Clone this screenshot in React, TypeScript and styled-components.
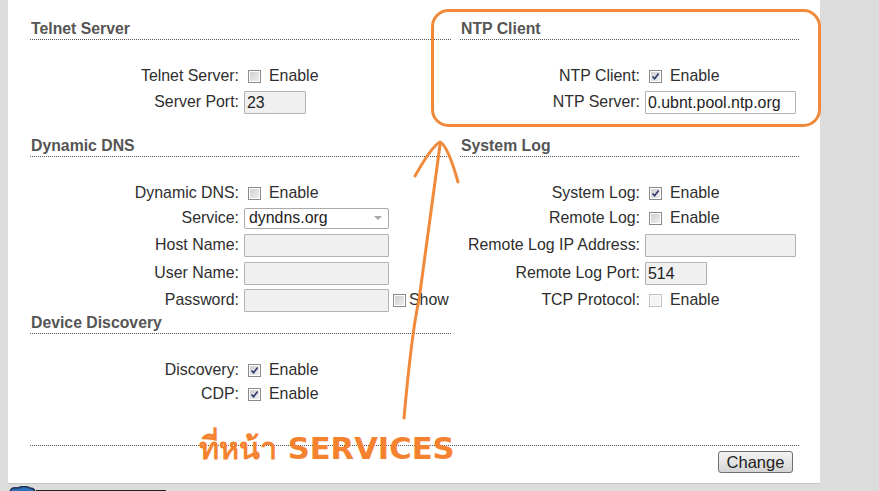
import React from "react";
import styled, { createGlobalStyle } from "styled-components";

const GlobalStyle = createGlobalStyle`
  html, body {
    margin: 0;
    padding: 0;
    background: #dcdcdc;
    font-family: "Liberation Sans", Arial, sans-serif;
  }
`;

type RowData = {
  label: string;
  kind: "check" | "input" | "select";
  checked?: boolean;
  disabled?: boolean;
  value?: string;
  width?: number;
  filled?: boolean;
  show?: boolean;
  height: number;
};

type SectionData = {
  title: string;
  gapTop: number;
  rows: RowData[];
};

const leftSections: SectionData[] = [
  {
    title: "Telnet Server",
    gapTop: 0,
    rows: [
      { label: "Telnet Server:", kind: "check", height: 24 },
      { label: "Server Port:", kind: "input", value: "23", width: 62, height: 28 },
    ],
  },
  {
    title: "Dynamic DNS",
    gapTop: 20,
    rows: [
      { label: "Dynamic DNS:", kind: "check", height: 24 },
      { label: "Service:", kind: "select", value: "dyndns.org", height: 26 },
      { label: "Host Name:", kind: "input", width: 145, height: 28 },
      { label: "User Name:", kind: "input", width: 145, height: 28 },
      { label: "Password:", kind: "input", width: 145, show: true, height: 26 },
    ],
  },
  {
    title: "Device Discovery",
    gapTop: 0,
    rows: [
      { label: "Discovery:", kind: "check", checked: true, height: 24 },
      { label: "CDP:", kind: "check", checked: true, height: 24 },
    ],
  },
];

const rightSections: SectionData[] = [
  {
    title: "NTP Client",
    gapTop: 0,
    rows: [
      { label: "NTP Client:", kind: "check", checked: true, height: 24 },
      { label: "NTP Server:", kind: "input", value: "0.ubnt.pool.ntp.org", width: 151, filled: true, height: 28 },
    ],
  },
  {
    title: "System Log",
    gapTop: 20,
    rows: [
      { label: "System Log:", kind: "check", checked: true, height: 24 },
      { label: "Remote Log:", kind: "check", height: 26 },
      { label: "Remote Log IP Address:", kind: "input", width: 151, height: 28 },
      { label: "Remote Log Port:", kind: "input", value: "514", width: 62, height: 28 },
      { label: "TCP Protocol:", kind: "check", disabled: true, height: 26 },
    ],
  },
];

const Page = styled.div`
  position: relative;
  width: 879px;
  height: 491px;
  padding-left: 8px;
  box-sizing: border-box;
  overflow: hidden;
`;

const Panel = styled.div`
  width: 812px;
  height: 484px;
  box-sizing: border-box;
  background: #fff;
  border-bottom: 1px solid #c4c4c4;
  padding: 19px 21px 0 22px;
`;

const Columns = styled.div`
  display: flex;
  gap: 9px;
  height: 426px;
`;

const Column = styled.div<{ $width: number }>`
  width: ${(p) => p.$width}px;
  display: flex;
  flex-direction: column;
`;

const Heading = styled.div<{ $gapTop: number }>`
  margin-top: ${(p) => p.$gapTop}px;
  height: 20px;
  line-height: 20px;
  padding-left: 1px;
  font-size: 15.8px;
  font-weight: bold;
  color: #555;
  border-bottom: 1px dotted #555;
`;

const Rows = styled.div`
  margin-top: 24px;
  display: flex;
  flex-direction: column;
`;

const Row = styled.div<{ $height: number }>`
  display: flex;
  align-items: center;
  height: ${(p) => p.$height}px;
  font-size: 15.9px;
  color: #2e2e2e;
`;

const Label = styled.div<{ $width: number }>`
  width: ${(p) => p.$width}px;
  text-align: right;
  white-space: nowrap;
  flex-shrink: 0;
`;

const Control = styled.div`
  display: flex;
  align-items: center;
  margin-left: 5px;
`;

const Box = styled.span<{ $disabled?: boolean; $tight?: boolean }>`
  width: 13px;
  height: 13px;
  box-sizing: border-box;
  margin: 0 ${(p) => (p.$tight ? 3 : 8)}px 0 4px;
  border: 1px solid ${(p) => (p.$disabled ? "#c2c2c2" : "#8a8a8a")};
  background: ${(p) => (p.$disabled ? "#fafafa" : "#fff")};
  padding: 1px;
  display: inline-flex;
`;

const BoxInner = styled.span<{ $disabled?: boolean }>`
  flex: 1;
  background: ${(p) =>
    p.$disabled ? "#f4f4f4" : "linear-gradient(135deg, #cfcfcf, #eeeeee)"};
  display: flex;
  align-items: center;
  justify-content: center;
`;

const TextBox = styled.div<{ $width: number; $filled?: boolean }>`
  width: ${(p) => p.$width}px;
  height: 23px;
  box-sizing: border-box;
  border: 1px solid #b3b3b3;
  border-radius: 1px;
  background: ${(p) => (p.$filled ? "#fff" : "#f0f0f0")};
  padding: 0 2px;
  line-height: 21px;
  font-size: 15.9px;
  color: #222;
  white-space: nowrap;
  overflow: hidden;
`;

const Select = styled.div`
  width: 145px;
  height: 21px;
  box-sizing: border-box;
  border: 1px solid #aaa;
  border-radius: 2px;
  background: #fff;
  padding: 0 4px;
  display: flex;
  align-items: center;
  justify-content: space-between;
  font-size: 15.9px;
  color: #222;
`;

const Caret = styled.span`
  width: 0;
  height: 0;
  border-left: 4px solid transparent;
  border-right: 4px solid transparent;
  border-top: 4px solid #a8a8a8;
  margin-right: 2px;
`;

const Actions = styled.div`
  border-top: 1px dotted #555;
  display: flex;
  justify-content: flex-end;
  padding: 5px 6px 0 0;
`;

const Button = styled.button`
  height: 22px;
  width: 75px;
  box-sizing: border-box;
  border: 1px solid #707070;
  border-radius: 3px;
  background: linear-gradient(#f4f4f4, #e4e4e4 50%, #d4d4d4);
  font-family: "Liberation Sans", Arial, sans-serif;
  font-size: 16.5px;
  color: #222;
  padding: 0;
`;

const Footer = styled.div`
  display: flex;
  align-items: flex-start;
  height: 7px;
  padding-top: 2px;
`;

const FooterBar = styled.div`
  width: 130px;
  height: 2px;
  margin-top: 4px;
  background: #222;
`;

const Overlay = styled.svg`
  position: absolute;
  left: 0;
  top: 0;
  pointer-events: none;
`;

const Callout = styled.div`
  position: absolute;
  left: 199px;
  top: 430px;
  font-family: "DejaVu Sans", Tahoma, sans-serif;
  font-weight: bold;
  font-size: 30.6px;
  line-height: 38px;
  color: #f5822f;
  white-space: nowrap;
`;

const Check: React.FC = () => (
  <svg width="9" height="9" viewBox="0 0 9 9">
    <path d="M1.5 4.5 L3.6 6.8 L7.6 1.6" fill="none" stroke="#2c3a6b" strokeWidth="1.6" />
  </svg>
);

const CheckBox: React.FC<{ checked?: boolean; disabled?: boolean; tight?: boolean }> = ({
  checked,
  disabled,
  tight,
}) => (
  <Box $disabled={disabled} $tight={tight}>
    <BoxInner $disabled={disabled}>{checked && <Check />}</BoxInner>
  </Box>
);

const FieldRow: React.FC<{ row: RowData; labelWidth: number }> = ({ row, labelWidth }) => (
  <Row $height={row.height}>
    <Label $width={labelWidth}>{row.label}</Label>
    <Control>
      {row.kind === "check" && (
        <>
          <CheckBox checked={row.checked} disabled={row.disabled} />
          <span>Enable</span>
        </>
      )}
      {row.kind === "input" && (
        <>
          <TextBox $width={row.width ?? 145} $filled={row.filled}>
            {row.value}
          </TextBox>
          {row.show && (
            <>
              <CheckBox tight />
              <span>Show</span>
            </>
          )}
        </>
      )}
      {row.kind === "select" && (
        <Select>
          <span>{row.value}</span>
          <Caret />
        </Select>
      )}
    </Control>
  </Row>
);

const Section: React.FC<{ data: SectionData; labelWidth: number }> = ({ data, labelWidth }) => (
  <>
    <Heading $gapTop={data.gapTop}>{data.title}</Heading>
    <Rows>
      {data.rows.map((r) => (
        <FieldRow key={r.label} row={r} labelWidth={labelWidth} />
      ))}
    </Rows>
  </>
);

export default function App() {
  return (
    <Page>
      <GlobalStyle />
      <Panel>
        <Columns>
          <Column $width={421}>
            {leftSections.map((s) => (
              <Section key={s.title} data={s} labelWidth={209} />
            ))}
          </Column>
          <Column $width={339}>
            {rightSections.map((s) => (
              <Section key={s.title} data={s} labelWidth={180} />
            ))}
          </Column>
        </Columns>
        <Actions>
          <Button>Change</Button>
        </Actions>
      </Panel>
      <Footer>
        <svg width="28" height="7" viewBox="0 0 28 7">
          <path d="M2 7 C2 2 6 1 10 2 C14 0 18 0 22 2 C25 2 27 4 27 7 Z" fill="#2f6fb5" stroke="#1d2f55" strokeWidth="1.5" />
        </svg>
        <FooterBar />
      </Footer>
      <Overlay width="879" height="491" viewBox="0 0 879 491">
        <rect x="432.5" y="10.5" width="387" height="115" rx="16" fill="none" stroke="#f0893a" strokeWidth="3" />
        <path d="M404 418 Q412 330 419 300 Q430 220 440 145" fill="none" stroke="#f0893a" strokeWidth="3" strokeLinecap="round" />
        <path d="M415 176 Q432 146 440 142 Q448 146 458 182" fill="none" stroke="#f0893a" strokeWidth="3" strokeLinecap="round" strokeLinejoin="round" />
      </Overlay>
      <Callout>ที่หน้า SERVICES</Callout>
    </Page>
  );
}
